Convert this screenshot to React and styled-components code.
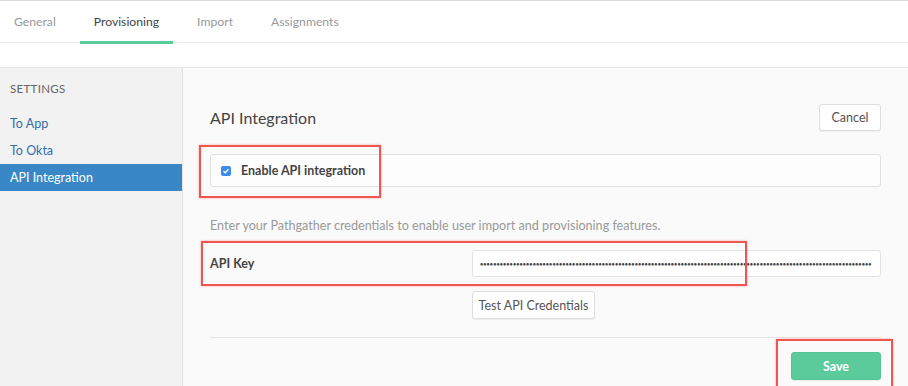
import React from "react"
import styled, { createGlobalStyle } from "styled-components"

const GlobalStyle = createGlobalStyle`
  body {
    margin: 0;
    background: #fff;
    font-family: Lato, "Open Sans", sans-serif;
  }
`

const Page = styled.div`
  position: relative;
  width: 908px;
  height: 386px;
  overflow: hidden;
  background: #fff;
`

const TabBar = styled.div`
  display: flex;
  gap: 10px;
  height: 43px;
  border-top: 1px solid #dcdcdc;
  border-bottom: 1px solid #ececec;
  box-sizing: border-box;
`

const Tab = styled.div`
  padding: 0 14px;
  display: flex;
  align-items: center;
  font-size: 12.2px;
  color: ${p => (p.active ? "#444" : "#999")};
  border-bottom: 3px solid ${p => (p.active ? "#5ccb9c" : "transparent")};
  margin-bottom: -2px;
  padding-top: 1px;
`

const Panel = styled.div`
  display: flex;
  margin-top: 24px;
  border-top: 1px solid #e6e6e6;
  height: 318px;
`

const Sidebar = styled.div`
  flex: 0 0 182px;
  background: #f2f2f2;
  border-right: 1px solid #e2e2e2;
`

const SideTitle = styled.div`
  padding: 14px 10px 15px;
  font-size: 11.5px;
  color: #666;
  letter-spacing: 0.3px;
`

const SideItem = styled.div`
  height: 27px;
  line-height: 27px;
  padding-left: 10px;
  font-size: 12.5px;
  white-space: nowrap;
  color: ${p => (p.active ? "#fff" : "#2f6fae")};
  background: ${p => (p.active ? "#3a87c8" : "transparent")};
`

const Main = styled.div`
  flex: 1;
  background: #fafafa;
  padding: 36px 27px 0;
`

const Header = styled.div`
  display: flex;
  justify-content: space-between;
  align-items: center;
  height: 27px;
`

const Heading = styled.div`
  font-size: 16px;
  color: #444;
`

const Button = styled.div`
  height: ${p => p.h || 27}px;
  width: ${p => p.w}px;
  box-sizing: border-box;
  display: flex;
  align-items: center;
  justify-content: center;
  border-radius: 3px;
  font-size: 12.5px;
  border: 1px solid ${p => (p.primary ? "#55c595" : "#dedede")};
  background: ${p => (p.primary ? "#5bcb9c" : "#fff")};
  color: ${p => (p.primary ? "#fff" : "#555")};
  font-weight: ${p => (p.primary ? 700 : 400)};
  box-shadow: 0 1px 1px rgba(0, 0, 0, 0.06);
`

const CheckRow = styled.div`
  margin-top: 23px;
  height: 33px;
  box-sizing: border-box;
  border: 1px solid #e0e0e0;
  border-radius: 3px;
  background: #fdfdfd;
  display: flex;
  align-items: center;
  padding-left: 10px;
  gap: 10px;
`

const Check = styled.div`
  width: 10px;
  height: 10px;
  border-radius: 2px;
  background: #3b8bea;
  display: flex;
  align-items: center;
  justify-content: center;
`

const Label = styled.div`
  font-size: 12.5px;
  font-weight: 700;
  color: #444;
`

const Hint = styled.div`
  margin-top: 31px;
  font-size: 12.6px;
  color: #999;
`

const FieldRow = styled.div`
  margin-top: 17px;
  display: flex;
  align-items: center;
`

const FieldLabel = styled(Label)`
  width: 262px;
`

const Input = styled.div`
  flex: 1;
  height: 27px;
  box-sizing: border-box;
  border: 1px solid #e2e2e2;
  border-radius: 3px;
  background: #fff;
  padding: 0 7px;
  display: flex;
  align-items: center;
  overflow: hidden;
  white-space: nowrap;
  font-size: 5.5px;
  font-weight: 700;
  letter-spacing: 0.1px;
  color: #444;
`

const Actions = styled.div`
  margin-top: 14px;
  padding-left: 262px;
`

const Divider = styled.div`
  margin-top: 18px;
  border-top: 1px solid #e6e6e6;
`

const Footer = styled.div`
  display: flex;
  justify-content: flex-end;
  margin-top: 14px;
`

const Callout = styled.div`
  position: absolute;
  border: 2px solid #f1554f;
  box-shadow: 0 0 2px rgba(241, 85, 79, 0.5);
`

export default function App() {
  const dots = "\u2022".repeat(119)
  return (
    <Page>
      <GlobalStyle />
      <TabBar>
        <Tab>General</Tab>
        <Tab active>Provisioning</Tab>
        <Tab>Import</Tab>
        <Tab>Assignments</Tab>
      </TabBar>
      <Panel>
        <Sidebar>
          <SideTitle>SETTINGS</SideTitle>
          <SideItem>To App</SideItem>
          <SideItem>To Okta</SideItem>
          <SideItem active>API Integration</SideItem>
        </Sidebar>
        <Main>
          <Header>
            <Heading>API Integration</Heading>
            <Button w={62}>Cancel</Button>
          </Header>
          <CheckRow>
            <Check>
              <svg width="8" height="8" viewBox="0 0 8 8">
                <path d="M1.5 4.2 L3.2 5.8 L6.5 2.2" fill="none" stroke="#fff" strokeWidth="1.3" />
              </svg>
            </Check>
            <Label>Enable API integration</Label>
          </CheckRow>
          <Hint>Enter your Pathgather credentials to enable user import and provisioning features.</Hint>
          <FieldRow>
            <FieldLabel>API Key</FieldLabel>
            <Input>{dots}</Input>
          </FieldRow>
          <Actions>
            <Button w={123} h={28}>Test API Credentials</Button>
          </Actions>
          <Divider />
          <Footer>
            <Button primary w={90} h={28}>Save</Button>
          </Footer>
        </Main>
      </Panel>
      <Callout style={{ left: 199, top: 145, width: 178, height: 49 }} />
      <Callout style={{ left: 201, top: 241, width: 542, height: 41 }} />
      <Callout style={{ left: 776, top: 339, width: 113, height: 48 }} />
    </Page>
  )
}
